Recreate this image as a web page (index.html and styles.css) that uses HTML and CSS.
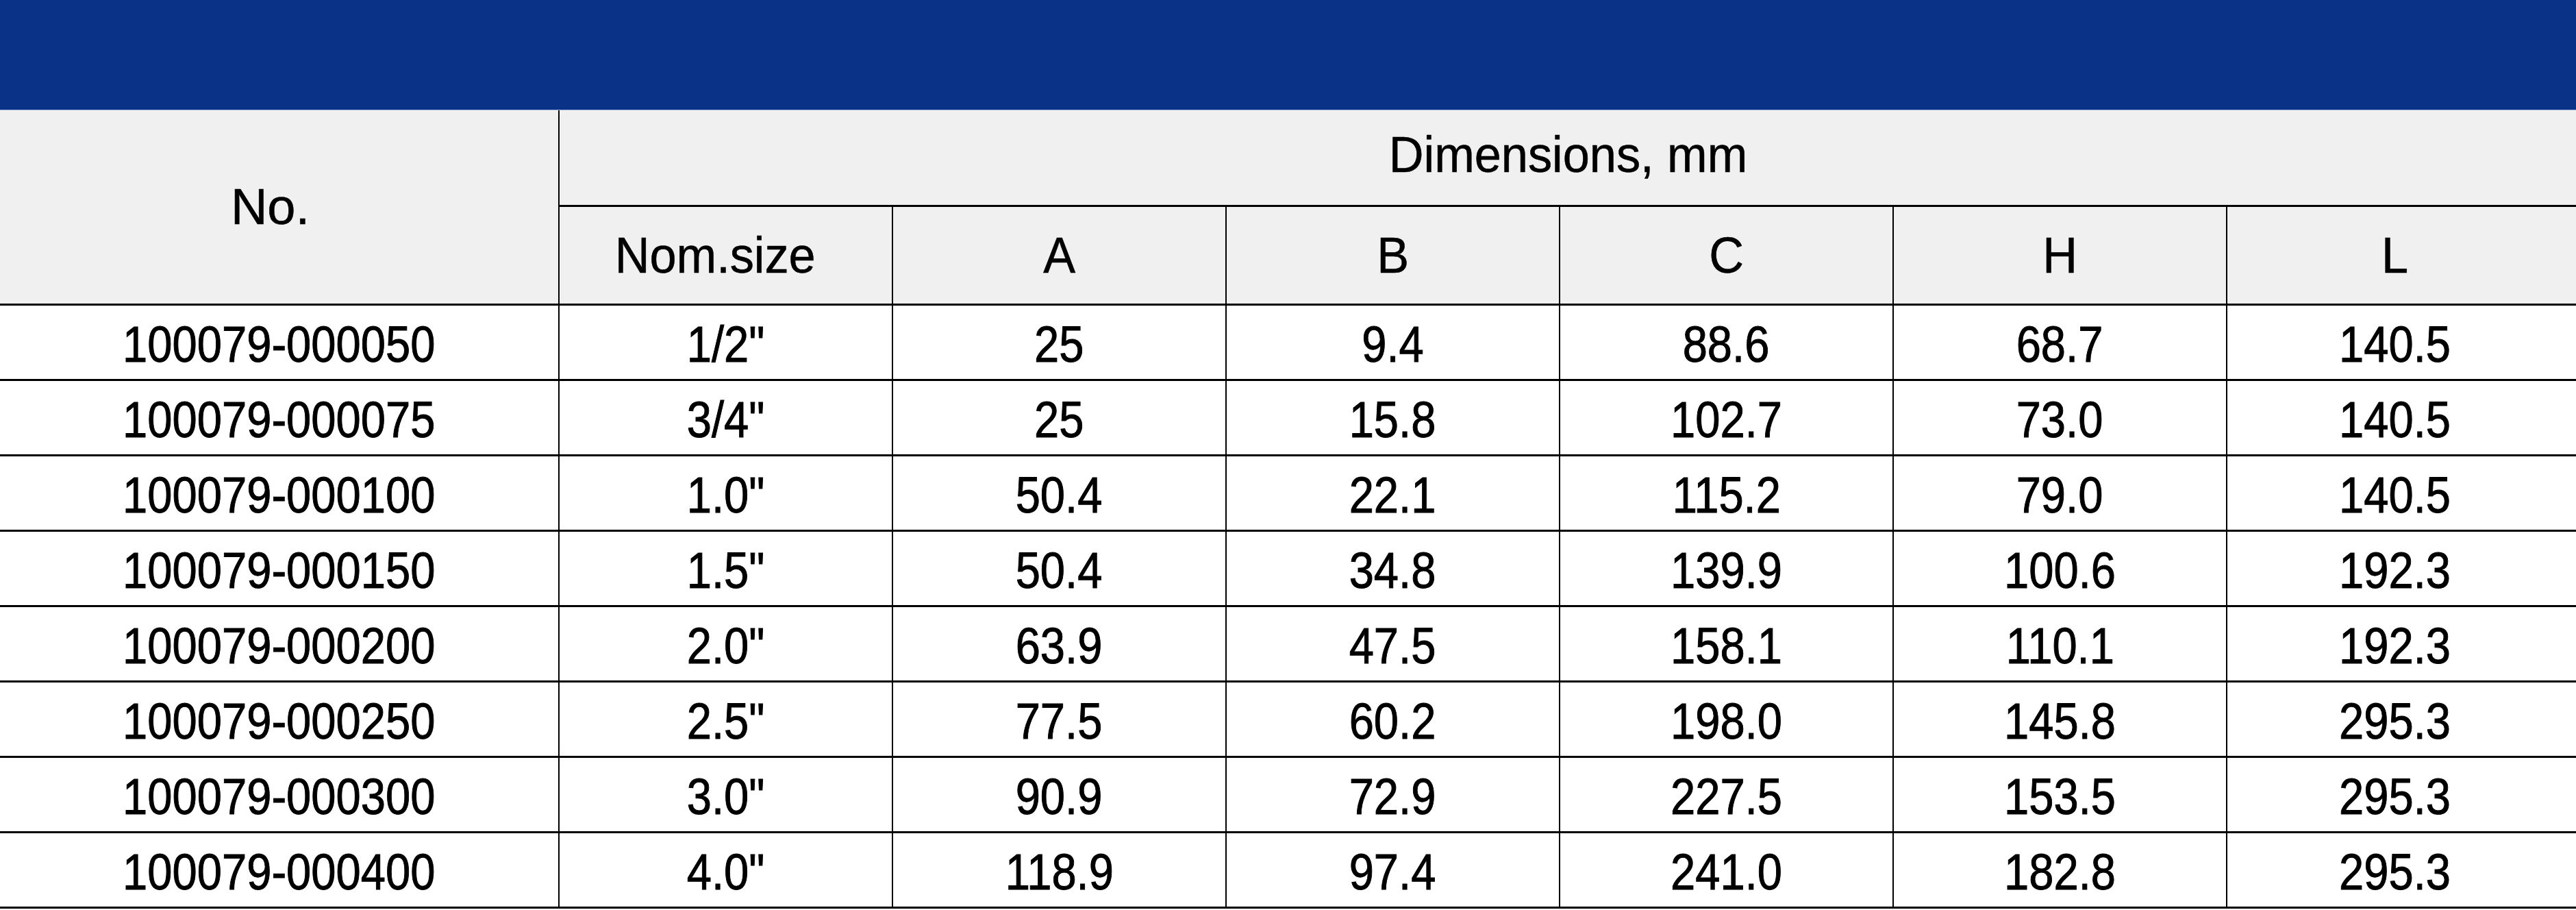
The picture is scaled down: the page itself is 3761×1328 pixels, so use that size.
FILE: index.html
```html
<!DOCTYPE html>
<html lang="en">
<head>
<meta charset="utf-8">
<title>Dimensions table</title>
<link rel="stylesheet" href="styles.css">
</head>
<body>
<div class="banner"></div>
<table class="spec">
  <colgroup>
    <col class="c-no">
    <col class="c-dim"><col class="c-dim"><col class="c-dim"><col class="c-dim"><col class="c-dim"><col class="c-last">
  </colgroup>
  <thead>
    <tr class="h1">
      <th rowspan="2" class="no-head">No.</th>
      <th colspan="6" class="dim-head"><span class="t up">Dimensions, mm</span></th>
    </tr>
    <tr class="h2">
      <th class="nom-head"><span class="t">Nom.size</span></th>
      <th><span class="t">A</span></th>
      <th><span class="t">B</span></th>
      <th><span class="t">C</span></th>
      <th><span class="t">H</span></th>
      <th class="last"><span class="t">L</span></th>
    </tr>
  </thead>
  <tbody>
    <tr><td><span class="n">100079-000050</span></td><td><span class="n">1/2"</span></td><td><span class="n">25</span></td><td><span class="n">9.4</span></td><td><span class="n">88.6</span></td><td><span class="n">68.7</span></td><td class="last"><span class="n">140.5</span></td></tr>
    <tr><td><span class="n">100079-000075</span></td><td><span class="n">3/4"</span></td><td><span class="n">25</span></td><td><span class="n">15.8</span></td><td><span class="n">102.7</span></td><td><span class="n">73.0</span></td><td class="last"><span class="n">140.5</span></td></tr>
    <tr><td><span class="n">100079-000100</span></td><td><span class="n">1.0"</span></td><td><span class="n">50.4</span></td><td><span class="n">22.1</span></td><td><span class="n">115.2</span></td><td><span class="n">79.0</span></td><td class="last"><span class="n">140.5</span></td></tr>
    <tr><td><span class="n">100079-000150</span></td><td><span class="n">1.5"</span></td><td><span class="n">50.4</span></td><td><span class="n">34.8</span></td><td><span class="n">139.9</span></td><td><span class="n">100.6</span></td><td class="last"><span class="n">192.3</span></td></tr>
    <tr><td><span class="n">100079-000200</span></td><td><span class="n">2.0"</span></td><td><span class="n">63.9</span></td><td><span class="n">47.5</span></td><td><span class="n">158.1</span></td><td><span class="n">110.1</span></td><td class="last"><span class="n">192.3</span></td></tr>
    <tr><td><span class="n">100079-000250</span></td><td><span class="n">2.5"</span></td><td><span class="n">77.5</span></td><td><span class="n">60.2</span></td><td><span class="n">198.0</span></td><td><span class="n">145.8</span></td><td class="last"><span class="n">295.3</span></td></tr>
    <tr><td><span class="n">100079-000300</span></td><td><span class="n">3.0"</span></td><td><span class="n">90.9</span></td><td><span class="n">72.9</span></td><td><span class="n">227.5</span></td><td><span class="n">153.5</span></td><td class="last"><span class="n">295.3</span></td></tr>
    <tr><td><span class="n">100079-000400</span></td><td><span class="n">4.0"</span></td><td><span class="n">118.9</span></td><td><span class="n">97.4</span></td><td><span class="n">241.0</span></td><td><span class="n">182.8</span></td><td class="last"><span class="n">295.3</span></td></tr>
  </tbody>
</table>
</body>
</html>
```
FILE: styles.css
```css
html, body {
  margin: 0;
  padding: 0;
  background: #ffffff;
}

body {
  width: 3761px;
  overflow: hidden;
  font-family: "Liberation Sans", Arial, sans-serif;
  color: #000000;
}

.banner {
  height: 160px;
  background: #0a3388;
  border-bottom: 1px solid #9fb0d8;
}

.spec {
  width: 3761px;
  table-layout: fixed;
  border-collapse: collapse;
  border-spacing: 0;
}

.c-no { width: 816px; }
.c-dim { width: 487px; }
.c-last { width: 510px; }

.spec th,
.spec td {
  padding: 0;
  text-align: center;
  vertical-align: middle;
  font-size: 74px;
  font-weight: normal;
  line-height: 1;
  border-right: 2px solid #000;
  border-bottom: 3px solid #000;
  white-space: nowrap;
  -webkit-text-stroke: 0.6px #000;
}

.spec .last {
  border-right: none;
  padding-right: 20px;
}

.spec thead th {
  background: #f0f0f0;
}

.spec .dim-head {
  border-right: none;
}

.spec .no-head {
  padding-right: 26px;
}

.spec .nom-head {
  padding-right: 30px;
}

.h1 th { height: 138px; }
.h2 th { height: 141px; }

.spec tbody td {
  height: 107px;
}

.t {
  display: inline-block;
  transform: scaleX(0.95);
}

.up {
  position: relative;
  top: -4px;
}

.n {
  display: inline-block;
  transform: scaleX(0.88);
  position: relative;
  top: 3px;
  -webkit-text-stroke: 1px #000;
}
```
